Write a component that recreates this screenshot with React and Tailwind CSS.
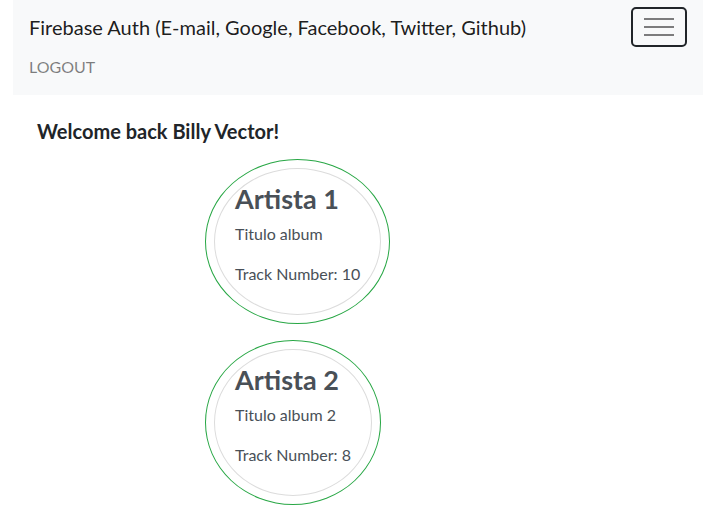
const albums = [
  { id: 1, artist: 'Artista 1', title: 'Titulo album', tracks: 10 },
  { id: 2, artist: 'Artista 2', title: 'Titulo album 2', tracks: 8 },
];

function AlbumCard({ album }) {
  return (
    <div className="inline-block self-start border border-[#28a745] rounded-[50%] p-2">
      <div className="border border-[#dcdcdc] rounded-[50%] px-5 pt-[13px] pb-3 text-[#495057]">
        <h3 className="text-[27px] leading-[34px] font-bold mb-[6px]">{album.artist}</h3>
        <p className="text-base leading-6 mb-4">{album.title}</p>
        <p className="text-base leading-6 mb-4">Track Number: {album.tracks}</p>
      </div>
    </div>
  );
}

export default function App() {
  return (
    <div className="min-h-screen bg-white text-[#212529]" style={{ fontFamily: 'Lato, "Open Sans", sans-serif' }}>
      {/* NAVBAR */}
      <nav className="ml-[13px] w-[690px] bg-[#f8f9fa] px-4 pt-[7px] pb-2">
        <div className="flex items-center justify-between">
          <span className="text-[20px] leading-[30px] text-black/90">
            Firebase Auth (E-mail, Google, Facebook, Twitter, Github)
          </span>
          <button className="w-14 h-10 border-2 border-[#212529] rounded-[5px] flex flex-col items-center justify-center gap-[6px]">
            <span className="block w-[30px] h-[2px] bg-black/50" />
            <span className="block w-[30px] h-[2px] bg-black/50" />
            <span className="block w-[30px] h-[2px] bg-black/50" />
          </button>
        </div>
        <div className="py-2 text-base leading-6 text-black/50">LOGOUT</div>
      </nav>

      {/* CONTENT */}
      <div className="pl-[37px] pt-6">
        <h5 className="text-[20px] leading-6 font-bold mb-4">Welcome back Billy Vector!</h5>
        <div className="flex flex-col gap-4 pl-[168px]">
          {albums.map((a) => (
            <AlbumCard key={a.id} album={a} />
          ))}
        </div>
      </div>
    </div>
  );
}
